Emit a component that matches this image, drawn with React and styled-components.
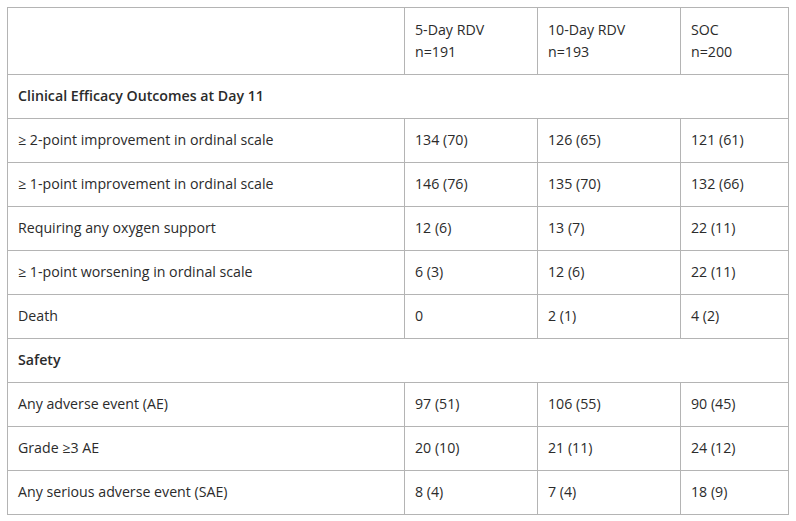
import React from "react";
import styled, { createGlobalStyle } from "styled-components";

const GlobalStyle = createGlobalStyle`
  body {
    margin: 0;
    background: #fff;
    font-family: "Open Sans", "Noto Sans", sans-serif;
    color: #2b2b2b;
  }
`;

const colWidths = [397, 133, 143, 108];

const groups = [
  { label: "5-Day RDV", n: "n=191" },
  { label: "10-Day RDV", n: "n=193" },
  { label: "SOC", n: "n=200" },
];

const sections = [
  {
    title: "Clinical Efficacy Outcomes at Day 11",
    rows: [
      ["≥ 2-point improvement in ordinal scale", "134 (70)", "126 (65)", "121 (61)"],
      ["≥ 1-point improvement in ordinal scale", "146 (76)", "135 (70)", "132 (66)"],
      ["Requiring any oxygen support", "12 (6)", "13 (7)", "22 (11)"],
      ["≥ 1-point worsening in ordinal scale", "6 (3)", "12 (6)", "22 (11)"],
      ["Death", "0", "2 (1)", "4 (2)"],
    ],
  },
  {
    title: "Safety",
    rows: [
      ["Any adverse event (AE)", "97 (51)", "106 (55)", "90 (45)"],
      ["Grade ≥3 AE", "20 (10)", "21 (11)", "24 (12)"],
      ["Any serious adverse event (SAE)", "8 (4)", "7 (4)", "18 (9)"],
    ],
  },
];

const App = () => {
  return (
    <Page>
      <GlobalStyle />
      <Table>
        <colgroup>
          {colWidths.map((w, i) => (
            <Col key={i} $w={w} />
          ))}
        </colgroup>
        <thead>
          <tr>
            <HeadCell />
            {groups.map((g) => (
              <HeadCell key={g.label}>
                {g.label}
                <br />
                {g.n}
              </HeadCell>
            ))}
          </tr>
        </thead>
        <tbody>
          {sections.map((s) => (
            <React.Fragment key={s.title}>
              <tr>
                <SectionCell colSpan={4}>{s.title}</SectionCell>
              </tr>
              {s.rows.map((r) => (
                <tr key={r[0]}>
                  {r.map((v, i) => (
                    <Cell key={i}>{v}</Cell>
                  ))}
                </tr>
              ))}
            </React.Fragment>
          ))}
        </tbody>
      </Table>
    </Page>
  );
};

export default App;

const Page = styled.div`
  padding: 7px 0 0 7px;
`;

const Table = styled.table`
  border-collapse: collapse;
  table-layout: fixed;
  width: 782px;
  font-size: 14.2px;
  line-height: 22px;
`;

const Col = styled.col`
  width: ${(props) => props.$w}px;
`;

const Cell = styled.td`
  border: 1px solid #b4b4b4;
  padding: 10px 10px 11px;
  height: 22px;
  text-align: left;
  vertical-align: middle;
  white-space: nowrap;
`;

const HeadCell = styled(Cell).attrs({ as: "th" })`
  font-weight: 400;
  padding: 11px 10px 11px;
  vertical-align: top;
`;

const SectionCell = styled(Cell)`
  font-weight: 600;
`;
